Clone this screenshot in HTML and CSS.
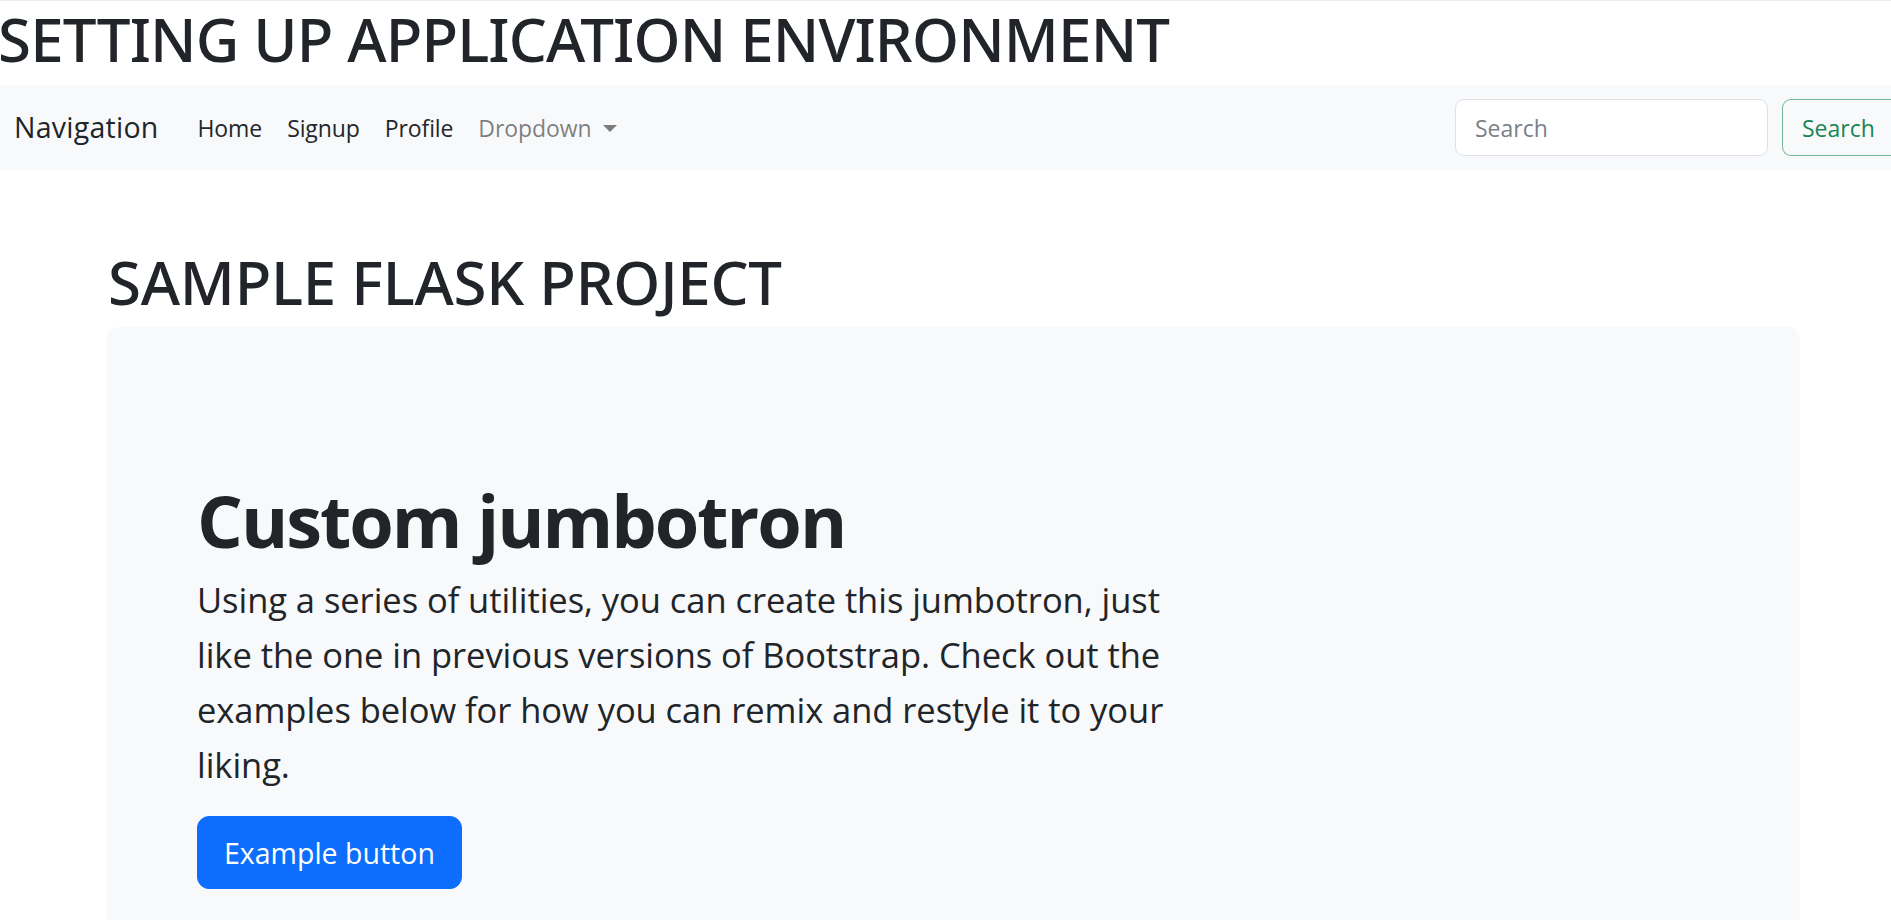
FILE: index.html
```html
<!DOCTYPE html>
<html lang="en">
<head>
<meta charset="utf-8">
<title>Sample Flask Project</title>
<link rel="stylesheet" href="styles.css">
</head>
<body>
  <h1 class="page-title">SETTING UP APPLICATION ENVIRONMENT</h1>

  <nav class="navbar">
    <a class="brand" href="#">Navigation</a>
    <ul class="nav-links">
      <li><a class="nav-link" href="#">Home</a></li>
      <li><a class="nav-link" href="#">Signup</a></li>
      <li><a class="nav-link" href="#">Profile</a></li>
      <li><a class="nav-link muted dropdown-toggle" href="#">Dropdown</a></li>
    </ul>
    <form class="search-form">
      <input class="search-input" type="search" placeholder="Search">
      <button class="search-btn" type="button">Search</button>
    </form>
  </nav>

  <main class="container">
    <h2 class="section-title">SAMPLE FLASK PROJECT</h2>
    <div class="jumbotron">
      <div class="jumbo-inner">
        <h1 class="jumbo-title">Custom jumbotron</h1>
        <p class="jumbo-text">Using a series of utilities, you can create this jumbotron, just like the one in previous versions of Bootstrap. Check out the examples below for how you can remix and restyle it to your liking.</p>
        <button class="btn-primary" type="button">Example button</button>
      </div>
    </div>
  </main>
</body>
</html>
```

FILE: styles.css
```css
* { box-sizing: border-box; }

html, body {
  margin: 0;
  padding: 0;
}

body {
  font-family: "Open Sans", "Noto Sans", sans-serif;
  color: #212529;
  background: #ffffff;
  border-top: 1px solid #e9ecef;
  overflow: hidden;
}

.page-title {
  margin: 0 0 0 -2px;
  padding: 2px 0 0 0;
  height: 84px;
  font-family: "Noto Sans", "Open Sans", sans-serif;
  font-size: 60px;
  font-weight: 500;
  line-height: 72px;
  letter-spacing: -0.85px;
  white-space: nowrap;
}

.navbar {
  display: flex;
  align-items: center;
  height: 85px;
  background: #f8f9fa;
  padding: 0 0 0 14px;
}

.brand {
  font-size: 28.5px;
  color: #212529;
  text-decoration: none;
  margin-right: 27px;
  padding-bottom: 2px;
  letter-spacing: 0.25px;
}

.nav-links {
  display: flex;
  list-style: none;
  margin: 0;
  padding: 0;
  gap: 1px;
}

.nav-link {
  display: block;
  padding: 0 12px;
  font-size: 23px;
  color: #24272b;
  text-decoration: none;
  letter-spacing: -0.1px;
}

.nav-link.muted {
  color: rgba(0, 0, 0, 0.5);
}

.dropdown-toggle::after {
  content: "";
  display: inline-block;
  margin-left: 12px;
  vertical-align: 5px;
  border-top: 7px solid rgba(0, 0, 0, 0.5);
  border-left: 7px solid transparent;
  border-right: 7px solid transparent;
}

.search-form {
  display: flex;
  margin-left: auto;
  gap: 14px;
}

.search-input {
  width: 313px;
  height: 57px;
  border: 1px solid #dee2e6;
  border-radius: 9px;
  background: #ffffff;
  padding: 0 19px;
  font-family: inherit;
  font-size: 23px;
  color: #212529;
  outline: none;
}

.search-input::placeholder {
  color: #7b8188;
}

.search-btn {
  width: 109px;
  height: 57px;
  border: 1px solid #75b798;
  border-right: none;
  border-radius: 9px 0 0 9px;
  background: transparent;
  padding: 0 0 0 19px;
  text-align: left;
  font-family: inherit;
  font-size: 23px;
  color: #198754;
}

.container {
  margin-left: 90px;
  width: 1710px;
  padding-left: 17px;
}

.section-title {
  margin: 0 0 9px 0;
  padding-top: 76px;
  padding-left: 1px;
  font-family: "Noto Sans", "Open Sans", sans-serif;
  font-size: 60px;
  font-weight: 500;
  line-height: 72px;
  letter-spacing: -0.25px;
}

.jumbotron {
  background: #f8f9fa;
  border-radius: 12px;
  padding: 150px 90px 144px 90px;
  min-height: 700px;
}

.jumbo-title {
  margin: 0 0 9px 0;
  font-size: 72px;
  font-weight: 700;
  line-height: 86px;
  letter-spacing: -2px;
}

.jumbo-text {
  margin: 0 0 24px 0;
  max-width: 1005px;
  font-size: 34.5px;
  line-height: 55px;
  letter-spacing: -0.05px;
}

.btn-primary {
  height: 73px;
  padding: 0 26px;
  border: 1px solid #0d6efd;
  border-radius: 12px;
  background: #0d6efd;
  color: #ffffff;
  font-family: inherit;
  font-size: 28.5px;
  letter-spacing: 0;
}
```
